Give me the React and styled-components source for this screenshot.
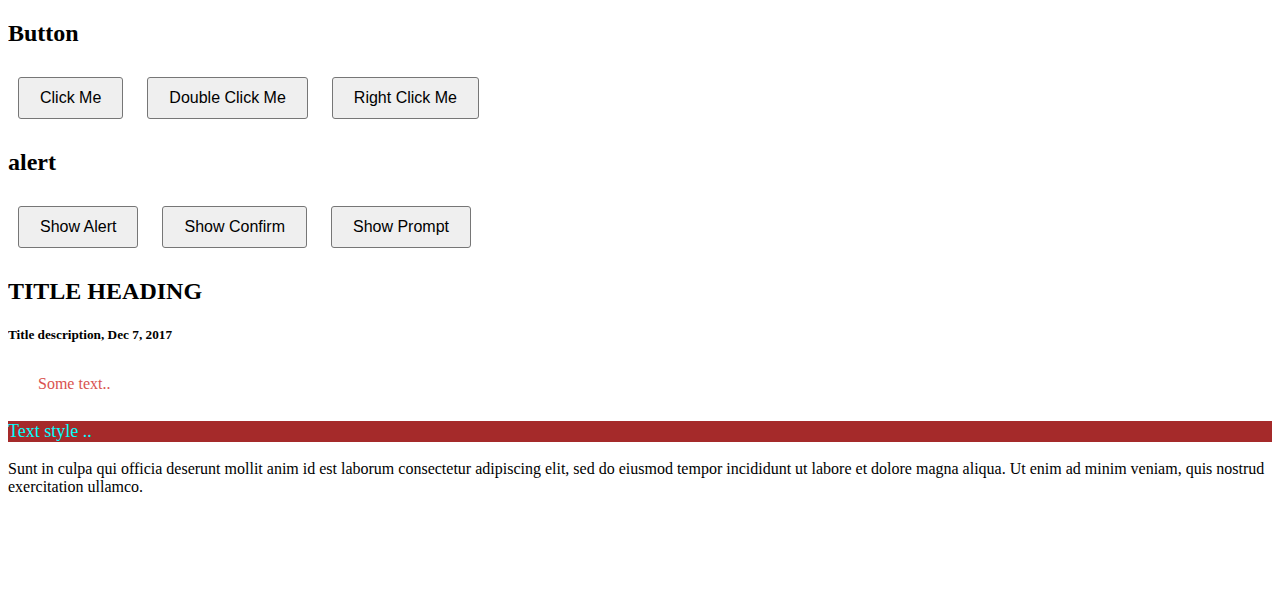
import React from 'react'
import styled, { createGlobalStyle } from 'styled-components'

const GlobalStyle = createGlobalStyle`
    body {
        margin: 0 8px 8px;
        font-family: "Liberation Serif", "Times New Roman", serif;
        color: #000;
        background: #fff;
    }
`;

const Heading = styled.h2`
    font-size: 24px;
    font-weight: bold;
    margin: 19.92px 0;
`;

const ButtonRow = styled.div`
    line-height: normal;
`;

const Button = styled.button`
    display: inline-block;
    margin: 10px;
    padding: 11px 21px;
    font-family: "Liberation Sans", Arial, sans-serif;
    font-size: 16px;
    color: #000;
    background-color: #efefef;
    border: 1px solid #767676;
    border-radius: 3px;
    cursor: pointer;
`;

const SubTitle = styled.h5`
    font-size: 13.28px;
    font-weight: bold;
    margin: 22.18px 0;
`;

const Note = styled.div`
    padding: 10px 30px;
    font-size: 16px;
    color: #d9534f;
`;

const Highlight = styled.p`
    font-size: 18px;
    margin: 18px 0;
    background-color: #a52a2a;
    color: #00ffff;
`;

const Body = styled.p`
    font-size: 16px;
    margin: 16px 0;
`;

const App = () => {
  return (
    <>
        <GlobalStyle />
        <Heading>Button</Heading>
        <ButtonRow>
            <Button>Click Me</Button> <Button>Double Click Me</Button> <Button>Right Click Me</Button>
        </ButtonRow>
        <Heading>alert</Heading>
        <ButtonRow>
            <Button>Show Alert</Button> <Button>Show Confirm</Button> <Button>Show Prompt</Button>
        </ButtonRow>
        <Heading>TITLE HEADING</Heading>
        <SubTitle>Title description, Dec 7, 2017</SubTitle>
        <Note>Some text..</Note>
        <Highlight>Text style ..</Highlight>
        <Body>
            Sunt in culpa qui officia deserunt mollit anim id est laborum consectetur adipiscing elit, sed do eiusmod tempor incididunt ut labore et dolore magna aliqua. Ut enim ad minim veniam, quis nostrud exercitation ullamco.
        </Body>
    </>
  )
}

export default App
